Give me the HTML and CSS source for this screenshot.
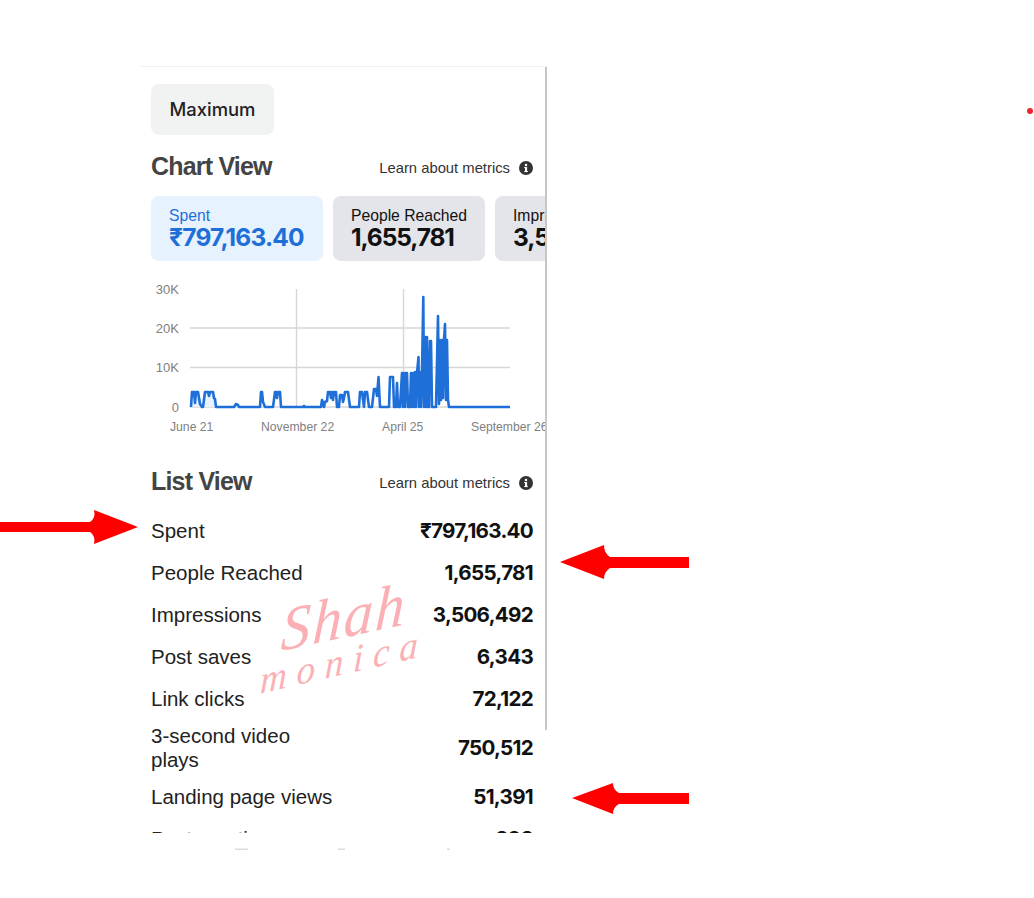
FILE: index.html
```html
<!DOCTYPE html>
<html lang="en">
<head>
    <meta charset="UTF-8">
    <meta name="viewport" content="width=device-width, initial-scale=1.0">
    <title>Ad metrics</title>
    <link rel="stylesheet" href="styles.css">
</head>
<body>
    <main class="pagina">
        <section class="panel">
            <div class="regla"></div>
            <button class="rango">Maximum</button>

            <div class="cabecera cabeceraChart">
                <h2>Chart View</h2>
                <a class="learn">Learn about metrics
                    <svg class="info" viewBox="0 0 14 14"><circle cx="7" cy="7" r="7" fill="#333"/><rect x="6" y="6" width="2.1" height="5" fill="#fff"/><rect x="5.2" y="6" width="2" height="1.1" fill="#fff"/><rect x="5.2" y="10.1" width="3.7" height="1" fill="#fff"/><circle cx="7" cy="3.9" r="1.25" fill="#fff"/></svg>
                </a>
            </div>

            <div class="tarjetas">
                <div class="tarjeta activa">
                    <span class="tLabel">Spent</span>
                    <strong class="tValor">₹797,163.40</strong>
                </div>
                <div class="tarjeta">
                    <span class="tLabel">People Reached</span>
                    <strong class="tValor">1,655,781</strong>
                </div>
                <div class="tarjeta">
                    <span class="tLabel">Impressions</span>
                    <strong class="tValor">3,506,492</strong>
                </div>
            </div>

            <svg class="grafica" viewBox="151 280 396 160">
                <g stroke="#d6d6d6" stroke-width="1.4" fill="none">
                    <path d="M190 328H510M190 367.500H510M190 407H510"/>
                    <path d="M296.500 289V407M403.500 289V407"/>
                </g>
                <g class="ejeY" text-anchor="end">
                    <text x="179" y="294">30K</text>
                    <text x="179" y="333">20K</text>
                    <text x="179" y="372">10K</text>
                    <text x="179" y="412">0</text>
                </g>
                <g class="ejeX">
                    <text x="170" y="431">June 21</text>
                    <text x="261" y="431">November 22</text>
                    <text x="382" y="431">April 25</text>
                    <text x="471" y="431">September 26</text>
                </g>
                <path fill="#e6f2fe" d="M191 407L192 392H199L202 407ZM202 407L204 392H214L216 407Z"/>
                <path fill="none" stroke="#1f6fd8" stroke-width="2.600" stroke-linejoin="round" d="M191 407L192 392L194 392L195 403L196 392L198 392L200 404L202 407L203 407L205 392L208 392L209 396L210 392L213 392L214 398L215 399L216 407L234 407L236 404L238 405L239 407L260 407L261 392L262 392L263 402L265 407L273 407L275 392L276 392L277 398L278 392L280 392L281 407L303 407L304 406L305 407L321 407L322 400L323 403L324 407L325 402L327 401L328 392L330 392L331 398L332 392L333 400L334 392L336 392L337 407L339 407L340 395L342 395L343 402L344 398L345 392L348 392L350 407L359 407L360 392L362 392L364 407L365 392L367 392L369 407L372 407L374 389L376 389L377 396L378.500 377L380 407L389 407L390 377L393 377L394 407L396 407L397 383L398 407L400 407L402 373L403 407L404 373L405 407L406 373L407 373L408 407L410 407L411 373L412 407L413 373L414 407L415 372L416 407L417 373L418.500 357L419 407L420 372L421 407L422 372L423.300 297L424 407L425 337L426 407L427 337L428 407L429 407L430 341L431 341L432 407L436 407L438 316L439 404L440 340L441 400L442 340L443 398L444 340L445 324L446 400L447 340L448 400L449 407L510 407"/>
            </svg>

            <div class="cabecera cabeceraList">
                <h2>List View</h2>
                <a class="learn">Learn about metrics
                    <svg class="info" viewBox="0 0 14 14"><circle cx="7" cy="7" r="7" fill="#333"/><rect x="6" y="6" width="2.1" height="5" fill="#fff"/><rect x="5.2" y="6" width="2" height="1.1" fill="#fff"/><rect x="5.2" y="10.1" width="3.7" height="1" fill="#fff"/><circle cx="7" cy="3.9" r="1.25" fill="#fff"/></svg>
                </a>
            </div>

            <ul class="lista">
                <li><span>Spent</span><b>₹797,163.40</b></li>
                <li><span>People Reached</span><b>1,655,781</b></li>
                <li><span>Impressions</span><b>3,506,492</b></li>
                <li><span>Post saves</span><b>6,343</b></li>
                <li><span>Link clicks</span><b>72,122</b></li>
                <li class="doble"><span>3-second video plays</span><b>750,512</b></li>
                <li><span>Landing page views</span><b>51,391</b></li>
                <li><span>Post reactions</span><b>393</b></li>
            </ul>

            <div class="firma">
                <span class="shah">Shah</span>
                <span class="monica">monica</span>
            </div>
        </section>

        <svg class="flechas" viewBox="0 0 1034 898">
            <path d="M0 522H90Q96 518 94 510L138 527L94 544Q96 536 90 532H0Z"/>
            <path d="M689 557H610Q604 553 604 545L560 562L604 579Q604 572 610 568H689Z"/>
            <path d="M689 793H619Q613 790 613 783L572 798L613 814Q613 807 619 804H689Z"/>
            <circle cx="1030" cy="111" r="3" fill="#e8282c"/>
            <path fill="#dcdcdc" d="M235 848.500H248V850H235ZM338 848.500H345V850H338ZM447 848.500H450V850H447Z"/>
        </svg>
    </main>
</body>
</html>
```

FILE: styles.css
```css
* {
    box-sizing: border-box;
}
html, body {
    margin: 0;
    background: white;
}
body {
    font-family: 'Liberation Sans', Arial, sans-serif;
    overflow: hidden;
}
.pagina {
    position: relative;
    height: 898px;
    padding: 66px 0 0 140px;
}
.panel {
    position: relative;
    width: 407px;
    height: 767px;
    padding: 17px 0 0 11px;
    overflow: hidden;
    border-top: 1px solid #f0f0f0;
}
.regla {
    position: absolute;
    top: 0;
    right: 0;
    width: 2px;
    height: 663px;
    background-color: #c6c6c6;
    z-index: 2;
}
.rango {
    display: block;
    width: 123px;
    height: 51px;
    padding-bottom: 3px;
    border: none;
    border-radius: 8px;
    background-color: #f1f2f2;
    color: #222;
    font-family: Inter, sans-serif;
    font-size: 18.4px;
    font-weight: 500;
}
.cabecera {
    display: flex;
    justify-content: space-between;
    align-items: center;
    width: 382px;
}
.cabecera h2 {
    margin: 0;
    font-size: 25px;
    font-weight: 700;
    letter-spacing: -0.8px;
    color: #444;
}
.cabeceraChart {
    height: 32px;
    margin-top: 15px;
}
.cabeceraList {
    height: 32px;
    margin-top: 25px;
}
.learn {
    display: flex;
    align-items: center;
    gap: 9px;
    margin-top: 3px;
    font-size: 14.8px;
    color: #333;
}
.info {
    width: 14px;
    height: 14px;
}
.tarjetas {
    display: flex;
    gap: 10px;
    margin-top: 14px;
}
.tarjeta {
    flex: none;
    height: 65px;
    padding: 11px 18px 0;
    border-radius: 8px;
    background-color: #e4e5ea;
    color: #111;
}
.tarjeta.activa {
    width: 172px;
    background-color: #e6f2fe;
    color: #1f6fd8;
}
.tLabel {
    display: block;
    font-size: 15.7px;
    line-height: 17px;
}
.tValor {
    display: block;
    font-family: Inter, sans-serif;
    font-size: 24.5px;
    line-height: 26px;
    letter-spacing: -1.1px;
}
.activa .tValor {
    letter-spacing: -0.8px;
}
.grafica {
    display: block;
    width: 396px;
    height: 160px;
    margin-top: 19px;
}
.grafica text {
    fill: #808080;
}
.ejeY text {
    font-size: 13px;
}
.ejeX text {
    font-size: 12.2px;
}
.lista {
    list-style: none;
    width: 382px;
    margin: 13px 0 0;
    padding: 0;
}
.lista li {
    display: flex;
    justify-content: space-between;
    align-items: center;
    min-height: 42px;
    font-size: 20.5px;
    line-height: 24px;
    color: #222;
}
.lista li.doble {
    min-height: 56px;
}
.lista li.doble span {
    max-width: 170px;
}
.lista b {
    font-family: Inter, sans-serif;
    font-size: 20.6px;
    font-weight: 700;
    letter-spacing: -0.7px;
    color: #111;
}
.firma {
    position: absolute;
    top: 510px;
    left: 110px;
    color: #fab0b4;
    font-family: 'Liberation Serif', serif;
    font-style: italic;
}
.shah {
    position: absolute;
    top: 6px;
    left: 30px;
    font-size: 60px;
    letter-spacing: 2px;
    transform: rotate(-12deg) skewX(-15deg);
}
.monica {
    position: absolute;
    top: 62px;
    left: 8px;
    font-size: 38px;
    letter-spacing: 10px;
    transform: rotate(-13deg) skewX(-15deg);
}
.flechas {
    position: absolute;
    top: 0;
    left: 0;
    width: 1034px;
    height: 898px;
    fill: #ff0000;
    pointer-events: none;
}
```
